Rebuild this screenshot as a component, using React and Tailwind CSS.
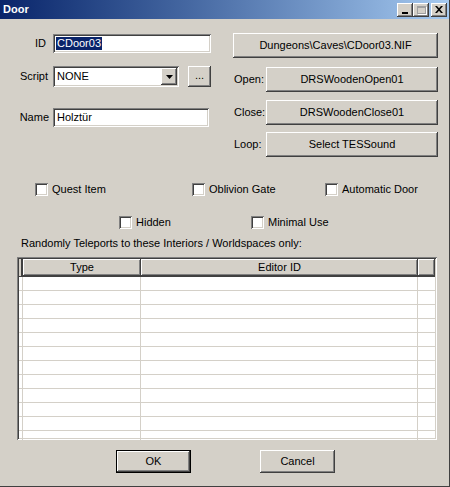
import React from 'react'

const raised =
  'bg-[#d4d0c8] shadow-[inset_-1px_-1px_0_#404040,inset_1px_1px_0_#ffffff,inset_-2px_-2px_0_#808080,inset_2px_2px_0_#d4d0c8]'
const sunken =
  'bg-white shadow-[inset_1px_1px_0_#808080,inset_-1px_-1px_0_#ffffff,inset_2px_2px_0_#404040,inset_-2px_-2px_0_#d4d0c8]'

const Btn = ({ className = '', children }) => (
  <div className={`${raised} flex items-center justify-center ${className}`}>{children}</div>
)

const Check = ({ label, className = '' }) => (
  <div className={`flex items-center h-[13px] ${className}`}>
    <div className={`${sunken} w-[13px] h-[13px] shrink-0`} />
    <span className="ml-[4px] whitespace-nowrap">{label}</span>
  </div>
)

const TitleButton = ({ children }) => (
  <div className={`${raised} w-[16px] h-[14px] flex items-center justify-center`}>{children}</div>
)

const Home = () => {
  const rows = Array.from({ length: 12 })
  return (
    <div className="w-[450px] h-[487px] overflow-hidden bg-[#d4d0c8] text-black text-[11px] leading-[13px] font-['Liberation_Sans',Arial,sans-serif] flex flex-col border-r border-b border-r-[#404040] border-b-[#404040]">
      {/* TITLE BAR */}
      <div className="h-[19px] shrink-0 bg-gradient-to-r from-[#0a246a] to-[#a6caf0] flex items-center pl-[3px] pr-[2px]">
        <span className="text-white font-bold text-[11px]">Door</span>
        <div className="ml-auto flex items-center">
          <TitleButton>
            <div className="w-[6px] h-[2px] bg-black mt-[6px]" />
          </TitleButton>
          <TitleButton>
            <div className="w-[9px] h-[8px] border border-[#a0a0a0] border-t-2 shadow-[1px_1px_0_#ffffff]" />
          </TitleButton>
          <div className="w-[2px]" />
          <TitleButton>
            <svg width="8" height="7" viewBox="0 0 8 7">
              <path d="M0 0h2l2 2.2L6 0h2L5 3.5 8 7H6L4 4.8 2 7H0l3-3.5z" fill="#000" />
            </svg>
          </TitleButton>
        </div>
      </div>

      {/* TOP FORM */}
      <div className="flex">
        {/* LEFT FIELDS */}
        <div className="w-[233px] flex flex-col">
          <div className="flex items-center mt-[15px] h-[19px]">
            <span className="w-[53px] text-right pr-[7px]">ID</span>
            <div className={`${sunken} w-[158px] h-[19px] flex items-center pl-[3px]`}>
              <span className="bg-[#0a246a] text-white px-[1px]">CDoor03</span>
            </div>
          </div>
          <div className="flex items-center mt-[13px] h-[21px]">
            <span className="w-[53px] text-right pr-[5px]">Script</span>
            <div className={`${sunken} w-[126px] h-[21px] flex items-center pl-[4px] pr-[2px]`}>
              <span>NONE</span>
              <div className={`${raised} ml-auto w-[16px] h-[17px] flex items-center justify-center`}>
                <svg width="7" height="4" viewBox="0 0 7 4">
                  <path d="M0 0h7L3.5 4z" fill="#000" />
                </svg>
              </div>
            </div>
            <Btn className="ml-[9px] w-[23px] h-[21px]">
              <span className="-mt-[2px]">...</span>
            </Btn>
          </div>
          <div className="flex items-center mt-[21px] h-[19px]">
            <span className="w-[53px] text-right pr-[4px]">Name</span>
            <div className={`${sunken} w-[156px] h-[19px] flex items-center pl-[4px]`}>
              <span>Holztür</span>
            </div>
          </div>
        </div>

        {/* RIGHT BUTTONS */}
        <div className="flex flex-col">
          <Btn className="mt-[14px] w-[205px] h-[25px]">Dungeons\Caves\CDoor03.NIF</Btn>
          <div className="flex items-center mt-[9px]">
            <span className="w-[33px] pl-[1px]">Open:</span>
            <Btn className="w-[172px] h-[25px]">DRSWoodenOpen01</Btn>
          </div>
          <div className="flex items-center mt-[8px]">
            <span className="w-[33px] pl-[1px]">Close:</span>
            <Btn className="w-[172px] h-[25px]">DRSWoodenClose01</Btn>
          </div>
          <div className="flex items-center mt-[7px]">
            <span className="w-[33px] pl-[1px]">Loop:</span>
            <Btn className="w-[172px] h-[25px]">Select TESSound</Btn>
          </div>
        </div>
      </div>

      {/* CHECKBOXES */}
      <div className="flex mt-[26px] pl-[35px]">
        <Check label="Quest Item" className="w-[157px]" />
        <Check label="Oblivion Gate" className="w-[133px]" />
        <Check label="Automatic Door" />
      </div>
      <div className="flex mt-[20px] pl-[119px]">
        <Check label="Hidden" className="w-[132px]" />
        <Check label="Minimal Use" />
      </div>

      <div className="mt-[8px] pl-[21px] h-[13px] whitespace-nowrap">
        Randomly Teleports to these Interiors / Worldspaces only:
      </div>

      {/* LIST VIEW */}
      <div className={`${sunken} ml-[17px] mt-[7px] w-[420px] h-[183px] p-[2px] flex flex-col overflow-hidden`}>
        <div className="flex h-[18px] shrink-0 border-b border-[#404040]">
          <div className="w-[4px] border-r-2 border-[#404040] bg-[#d4d0c8]" />
          <div className={`${raised} w-[118px] flex items-center justify-center`}>Type</div>
          <div className={`${raised} w-[277px] flex items-center justify-center`}>Editor ID</div>
          <div className={`${raised} flex-1`} />
        </div>
        <div className="flex flex-col">
          {rows.map((_, i) => (
            <div key={i} className="flex h-[14px] shrink-0 border-b border-[#d4d0c8]">
              <div className="w-[4px] border-r border-[#d4d0c8]" />
              <div className="w-[118px] border-r border-[#d4d0c8]" />
              <div className="w-[277px] border-r border-[#d4d0c8]" />
              <div className="flex-1" />
            </div>
          ))}
        </div>
      </div>

      {/* BOTTOM BUTTONS */}
      <div className="flex mt-[10px]">
        <div className="ml-[116px] w-[75px] h-[23px] border border-black">
          <Btn className="w-full h-full">OK</Btn>
        </div>
        <Btn className="ml-[69px] w-[75px] h-[23px]">Cancel</Btn>
      </div>
    </div>
  )
}

export default Home
